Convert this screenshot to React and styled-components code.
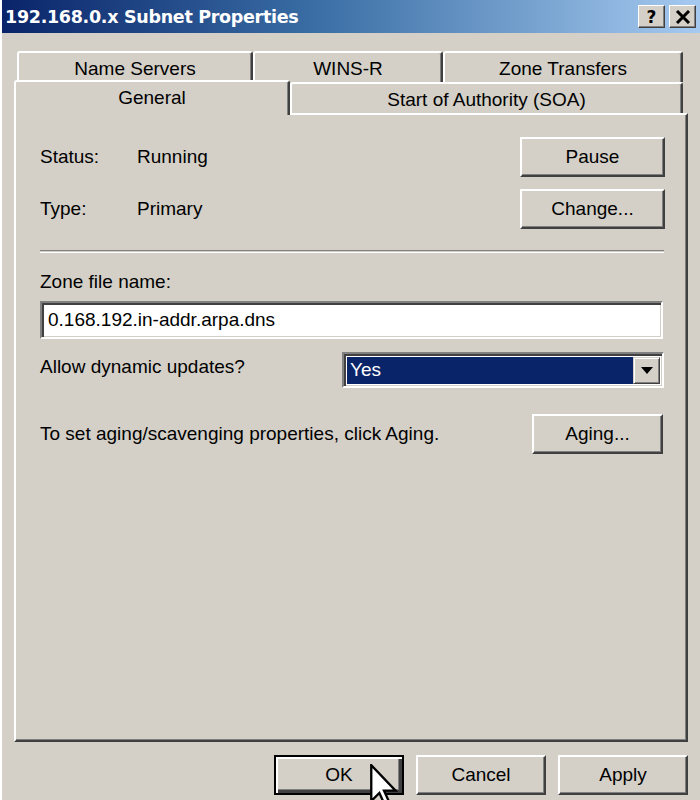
import styled, { createGlobalStyle } from "styled-components";

const GlobalStyle = createGlobalStyle`
  html, body {
    margin: 0;
    padding: 0;
    background: #d4d0c8;
  }
  body {
    font-family: "Liberation Sans", Arial, sans-serif;
    font-size: 19px;
    color: #000;
  }
`;

function CloseGlyph() {
  return (
    <svg width="16" height="14" viewBox="0 0 16 14">
      <path d="M2 1 L14 13 M14 1 L2 13" stroke="#000" strokeWidth="3" />
    </svg>
  );
}

function Pointer() {
  return (
    <svg width="28" height="44" viewBox="0 0 12 19">
      <path
        d="M0.5 0.5 L0.5 16 L4 12.5 L6.5 18 L8.5 17 L6 11.5 L11 11.5 Z"
        fill="#fff"
        stroke="#000"
        strokeWidth="1"
        strokeLinejoin="miter"
      />
    </svg>
  );
}

function App() {
  return (
    <>
      <GlobalStyle />
      <Window>
        <TitleBar>
          <Title>192.168.0.x Subnet Properties</Title>
          <TitleButtons>
            <TitleButton>?</TitleButton>
            <TitleButton>
              <CloseGlyph />
            </TitleButton>
          </TitleButtons>
        </TitleBar>

        <Body>
          <TabArea>
            <TabRow $back>
              <Tab $w={236}>Name Servers</Tab>
              <Tab $w={190}>WINS-R</Tab>
              <Tab $w={240}>Zone Transfers</Tab>
            </TabRow>
            <TabRow>
              <Tab $w={276} $active>
                General
              </Tab>
              <Tab $w={393}>Start of Authority (SOA)</Tab>
            </TabRow>
          </TabArea>

          <Panel>
            <InfoRow>
              <Label>Status:</Label>
              <Value>Running</Value>
              <Button $w={145}>Pause</Button>
            </InfoRow>
            <InfoRow $gap={12}>
              <Label>Type:</Label>
              <Value>Primary</Value>
              <Button $w={145}>Change...</Button>
            </InfoRow>

            <Separator />

            <FieldLabel>Zone file name:</FieldLabel>
            <TextBox>0.168.192.in-addr.arpa.dns</TextBox>

            <SelectRow>
              <Value>Allow dynamic updates?</Value>
              <Select>
                <SelectValue>Yes</SelectValue>
                <DropButton>
                  <svg width="12" height="7" viewBox="0 0 12 7">
                    <path d="M0 0 H12 L6 7 Z" fill="#000" />
                  </svg>
                </DropButton>
              </Select>
            </SelectRow>

            <AgingRow>
              <Value>To set aging/scavenging properties, click Aging.</Value>
              <Button $w={131}>Aging...</Button>
            </AgingRow>
          </Panel>

          <Footer>
            <Button $w={130} $default>
              OK
              <CursorSpot>
                <Pointer />
              </CursorSpot>
            </Button>
            <Button $w={130}>Cancel</Button>
            <Button $w={130}>Apply</Button>
          </Footer>
        </Body>
      </Window>
    </>
  );
}

const Window = styled.div`
  width: 700px;
  height: 800px;
  overflow: hidden;
  display: flex;
  flex-direction: column;
  background: #d4d0c8;
  border-left: 2px solid #fff;
  box-sizing: border-box;
`;

const TitleBar = styled.div`
  height: 33px;
  display: flex;
  align-items: center;
  justify-content: space-between;
  padding: 0 4px 0 3px;
  background: linear-gradient(to right, #0a246a 0%, #3a6ea5 45%, #a6caf0 100%);
  flex-shrink: 0;
`;

const Title = styled.div`
  color: #fff;
  font-family: "DejaVu Sans", Verdana, sans-serif;
  font-weight: bold;
  font-size: 17.5px;
  letter-spacing: -0.3px;
`;

const TitleButtons = styled.div`
  display: flex;
  gap: 4px;
`;

const TitleButton = styled.div`
  width: 27px;
  height: 23px;
  box-sizing: border-box;
  display: flex;
  align-items: center;
  justify-content: center;
  background: #d4d0c8;
  border: 1px solid;
  border-color: #fff #404040 #404040 #fff;
  box-shadow: inset -1px -1px #808080;
  font-family: "DejaVu Sans", Verdana, sans-serif;
  font-weight: bold;
  font-size: 17px;
`;

const Body = styled.div`
  padding: 0 12px 0 12px;
  display: flex;
  flex-direction: column;
`;

const TabArea = styled.div`
  margin-top: 18px;
  display: flex;
  flex-direction: column;
`;

const TabRow = styled.div`
  display: flex;
  height: 31px;
  margin: ${(p) => (p.$back ? "0 5px 0 3px" : "0 5px 0 0")};
`;

const Tab = styled.div`
  width: ${(p) => p.$w}px;
  box-sizing: border-box;
  background: #d4d0c8;
  border-top: 2px solid #fff;
  border-left: 2px solid #fff;
  border-right: 2px solid #404040;
  border-radius: 3px 3px 0 0;
  box-shadow: inset -1px 0 #808080;
  display: flex;
  align-items: center;
  justify-content: center;
  padding-top: 3px;
  position: relative;
  z-index: ${(p) => (p.$active ? 2 : 1)};
  height: ${(p) => (p.$active ? "35px" : "31px")};
  margin-top: ${(p) => (p.$active ? "-2px" : "0")};
  padding-bottom: ${(p) => (p.$active ? "4px" : "0")};
`;

const Panel = styled.div`
  height: 629px;
  box-sizing: border-box;
  border: 2px solid;
  border-color: #fff #404040 #404040 #fff;
  box-shadow: inset -1px -1px #808080;
  padding: 22px 21px 0 24px;
  display: flex;
  flex-direction: column;
`;

const InfoRow = styled.div`
  display: flex;
  align-items: center;
  margin-top: ${(p) => p.$gap || 0}px;
`;

const Label = styled.div`
  width: 97px;
`;

const Value = styled.div`
  flex: 1;
`;

const Button = styled.div`
  position: relative;
  width: ${(p) => p.$w}px;
  height: 40px;
  box-sizing: border-box;
  display: flex;
  align-items: center;
  justify-content: center;
  background: #d4d0c8;
  border: 2px solid;
  border-color: ${(p) =>
    p.$default ? "#000" : "#fff #404040 #404040 #fff"};
  box-shadow: ${(p) =>
    p.$default
      ? "inset 2px 2px #fff, inset -3px -3px #404040, inset -4px -4px #808080"
      : "inset -1px -1px #808080"};
  flex-shrink: 0;
`;

const Separator = styled.div`
  margin-top: 21px;
  height: 1px;
  border-top: 1px solid #808080;
  border-bottom: 1px solid #fff;
  margin-right: 1px;
`;

const FieldLabel = styled.div`
  margin-top: 18px;
  line-height: 22px;
`;

const TextBox = styled.div`
  margin-top: 8px;
  height: 38px;
  box-sizing: border-box;
  background: #fff;
  border: 2px solid;
  border-color: #808080 #fff #fff #808080;
  box-shadow: inset 2px 2px #404040, inset -1px -1px #d4d0c8;
  padding: 0 6px;
  display: flex;
  align-items: center;
  margin-right: 2px;
`;

const SelectRow = styled.div`
  margin-top: 10px;
  display: flex;
  align-items: center;
  height: 36px;
  padding-bottom: 5px;
  box-sizing: content-box;
`;

const Select = styled.div`
  width: 322px;
  height: 36px;
  box-sizing: border-box;
  display: flex;
  background: #fff;
  border: 2px solid;
  border-color: #808080 #fff #fff #808080;
  box-shadow: inset 2px 2px #404040, inset -1px -1px #d4d0c8;
  padding: 3px 2px 2px 3px;
  margin-right: 1px;
  margin-bottom: -5px;
`;

const SelectValue = styled.div`
  flex: 1;
  background: #0a246a;
  color: #fff;
  display: flex;
  align-items: center;
  padding-left: 3px;
`;

const DropButton = styled.div`
  width: 27px;
  box-sizing: border-box;
  display: flex;
  align-items: center;
  justify-content: center;
  background: #d4d0c8;
  border: 1px solid;
  border-color: #d4d0c8 #404040 #404040 #d4d0c8;
  box-shadow: inset 1px 1px #fff, inset -1px -1px #808080;
`;

const AgingRow = styled.div`
  margin-top: 24px;
  display: flex;
  align-items: center;
  padding-right: 2px;
`;

const Footer = styled.div`
  margin-top: 13px;
  display: flex;
  justify-content: flex-end;
  gap: 12px;
`;

const CursorSpot = styled.div`
  position: absolute;
  left: 94px;
  top: 7px;
  line-height: 0;
`;

export default App;
